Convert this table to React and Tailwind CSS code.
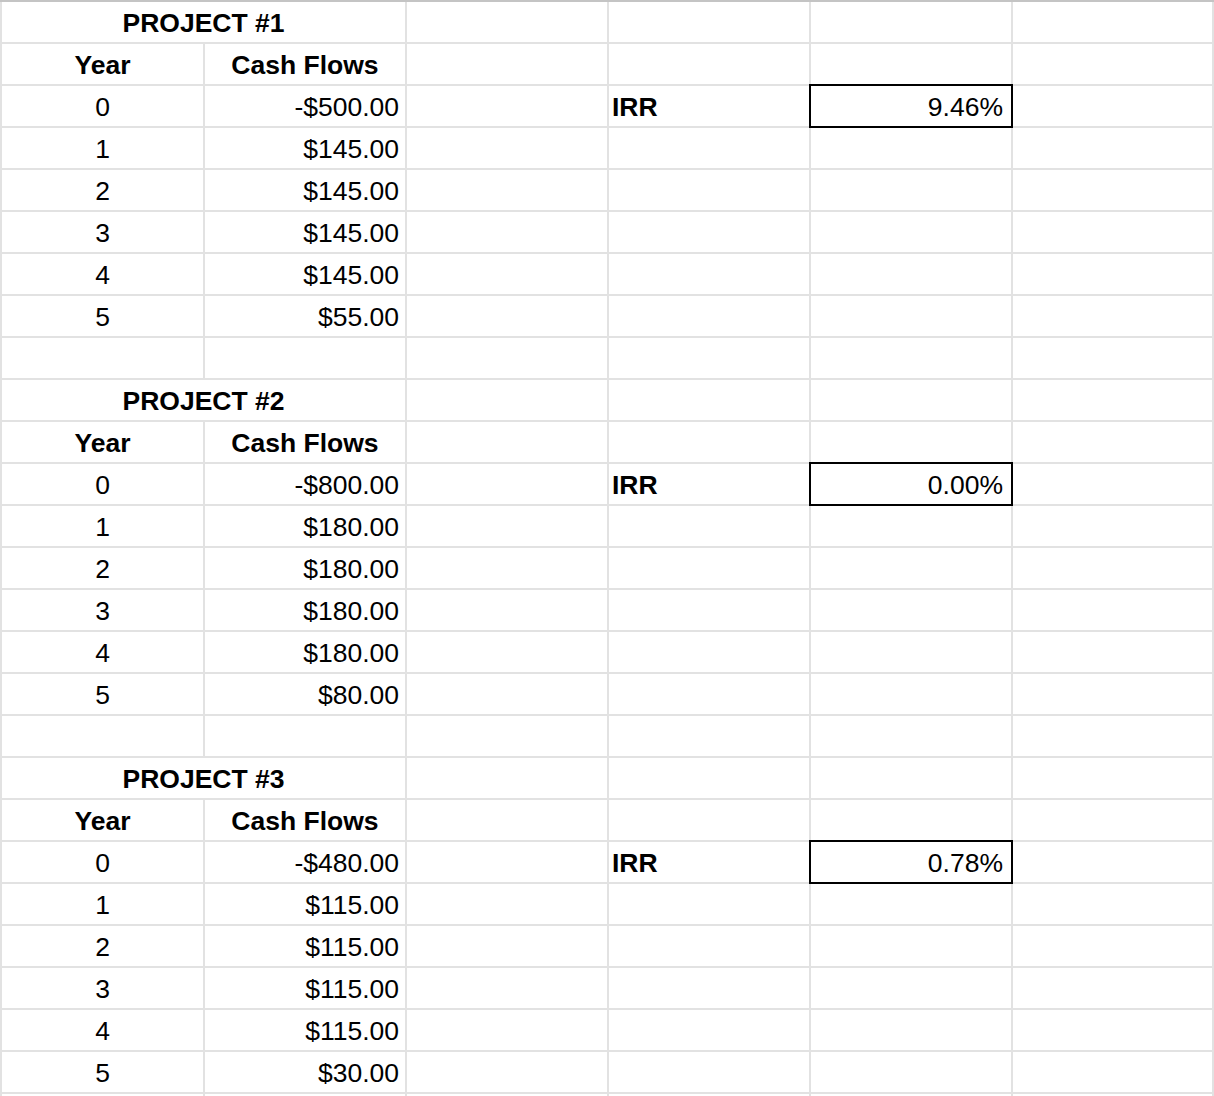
import React from "react";

const projects = [
  { name: "PROJECT #1", flows: ["-$500.00", "$145.00", "$145.00", "$145.00", "$145.00", "$55.00"], irr: "9.46%" },
  { name: "PROJECT #2", flows: ["-$800.00", "$180.00", "$180.00", "$180.00", "$180.00", "$80.00"], irr: "0.00%" },
  { name: "PROJECT #3", flows: ["-$480.00", "$115.00", "$115.00", "$115.00", "$115.00", "$30.00"], irr: "0.78%" },
];

const cell = "h-[42px] border-r-2 border-b-2 border-[#e2e2e2] flex items-end pb-[4px] leading-[30px] whitespace-nowrap";
const firstCol = "border-l-2";

function Empty({ first }) {
  return <div className={`${cell} ${first ? firstCol : ""}`} />;
}

function TitleRow({ name }) {
  return (
    <>
      <div className={`${cell} ${firstCol} col-span-2 justify-center font-bold`}>{name}</div>
      <Empty />
      <Empty />
      <Empty />
      <Empty />
    </>
  );
}

function HeaderRow() {
  return (
    <>
      <div className={`${cell} ${firstCol} justify-center font-bold`}>Year</div>
      <div className={`${cell} justify-center font-bold`}>Cash Flows</div>
      <Empty />
      <Empty />
      <Empty />
      <Empty />
    </>
  );
}

function DataRow({ year, flow, irr }) {
  return (
    <>
      <div className={`${cell} ${firstCol} justify-center`}>{year}</div>
      <div className={`${cell} justify-end pr-[6px]`}>{flow}</div>
      <Empty />
      <div className={`${cell} pl-[3px] font-bold`}>{irr ? "IRR" : ""}</div>
      <div className={`${cell} relative justify-end pr-[8px]`}>
        {irr && (
          <>
            <div className="absolute -left-[2px] -top-[2px] -right-[2px] -bottom-[2px] border-2 border-black" />
            <span className="relative">{irr}</span>
          </>
        )}
      </div>
      <Empty />
    </>
  );
}

function BlankRow() {
  return (
    <>
      <Empty first />
      <Empty />
      <Empty />
      <Empty />
      <Empty />
      <Empty />
    </>
  );
}

export default function App() {
  return (
    <div
      className="w-[1214px] h-[1096px] overflow-hidden bg-white text-black text-[26.5px]"
      style={{ fontFamily: '"Liberation Sans", Arial, sans-serif' }}
    >
      <div className="grid grid-cols-[205px_202px_202px_202px_202px_201px] border-t-2 border-[#c4c4c4]">
        {projects.map((p, i) => (
          <React.Fragment key={p.name}>
            {i > 0 && <BlankRow />}
            <TitleRow name={p.name} />
            <HeaderRow />
            {p.flows.map((f, y) => (
              <DataRow key={y} year={y} flow={f} irr={y === 0 ? p.irr : null} />
            ))}
          </React.Fragment>
        ))}
        <BlankRow />
      </div>
    </div>
  );
}
